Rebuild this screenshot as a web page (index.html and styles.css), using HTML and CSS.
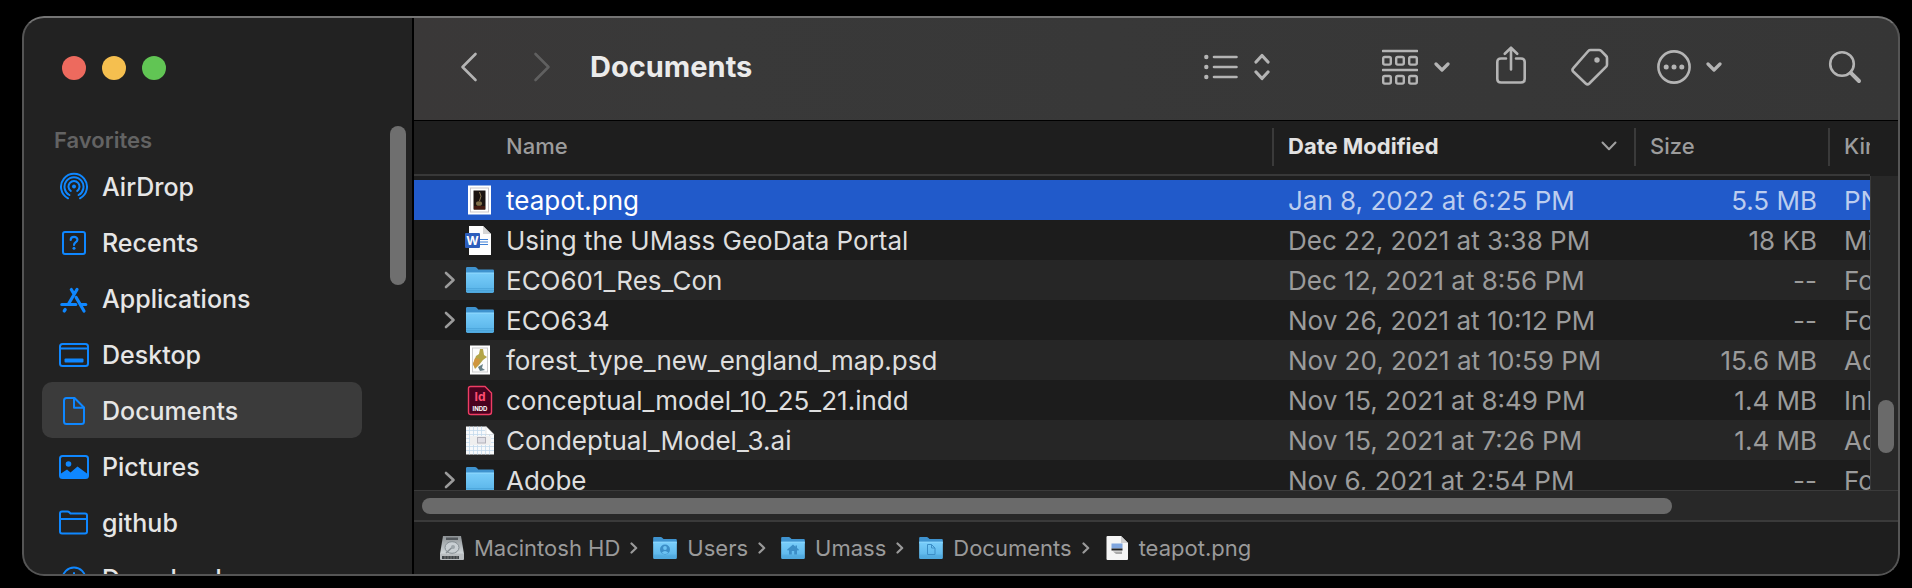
FILE: index.html
```html
<!DOCTYPE html>
<html lang="en">
<head>
<meta charset="utf-8">
<title>Documents</title>
<link rel="stylesheet" href="styles.css">
</head>
<body>
<svg class="defs" aria-hidden="true">
  <defs>
    <linearGradient id="gFolder" x1="0" y1="0" x2="0" y2="1"><stop offset="0" stop-color="#79cdfa"/><stop offset=".75" stop-color="#5fb9ec"/><stop offset="1" stop-color="#4da6dc"/></linearGradient>
    <linearGradient id="gDisk" x1="0" y1="0" x2="0" y2="1"><stop offset="0" stop-color="#8e9396"/><stop offset="1" stop-color="#d3d9dc"/></linearGradient>
    <symbol id="folder" viewBox="0 0 28 26">
      <path d="M0 1.2Q0 0 1.2 0H9q1 0 1.700.8L12.300 2.500H26.800Q28 2.500 28 3.700V8H0Z" fill="#3f93cf"/>
      <path d="M0 6h28v18.600q0 1.400-1.400 1.400H1.400Q0 26 0 24.600Z" fill="url(#gFolder)"/>
      <path d="M0 6h28" stroke="#93dbff" stroke-width="1"/>
      <path d="M0 21.500h28M0 23.500h28" stroke="#459dd3" stroke-width=".6"/>
    </symbol>
    <symbol id="down" viewBox="0 0 16 10"><path d="M2 2l6 6 6-6" fill="none" stroke="currentColor" stroke-width="3.200" stroke-linecap="round" stroke-linejoin="round"/></symbol>
    <symbol id="disclose" viewBox="0 0 12 18"><path d="M2 2l7.500 7L2 16" fill="none" stroke="currentColor" stroke-width="2.600" stroke-linecap="round" stroke-linejoin="round"/></symbol>
    <symbol id="crumb" viewBox="0 0 8 12"><path d="M1.500 1.500L6.200 6 1.500 10.500" fill="none" stroke="currentColor" stroke-width="2.200" stroke-linecap="round" stroke-linejoin="round"/></symbol>
  </defs>
</svg>

<div class="window">
  <aside class="sidebar">
    <div class="lights">
      <button class="light close" aria-label="Close"></button>
      <button class="light minimize" aria-label="Minimize"></button>
      <button class="light zoom" aria-label="Zoom"></button>
    </div>
    <div class="side-body">
      <nav class="places" aria-labelledby="fav">
        <h2 class="places-title" id="fav">Favorites</h2>
        <a class="place" href="#airdrop">
          <svg class="place-icon" viewBox="0 0 30 30"><path d="M9 27A13 13 0 1 1 21 27M10.400 23.700A9.500 9.500 0 1 1 19.600 23.700M11.800 19.700A5.500 5.500 0 1 1 18.200 19.700" transform="translate(0 -.7)"/><circle class="fill" cx="15" cy="14.500" r="2"/></svg>
          AirDrop</a>
        <a class="place" href="#recents">
          <svg class="place-icon" viewBox="0 0 30 30"><rect x="4" y="4" width="22" height="22" rx="2"/><path class="thick" d="M11.700 12C11.700 7.800 18.400 7.800 18.400 11.800 18.400 14.300 15 14 15 17"/><circle class="fill" cx="15" cy="20.300" r="1.500"/></svg>
          Recents</a>
        <a class="place" href="#applications">
          <svg class="place-icon" viewBox="0 0 30 30"><path class="heavy" d="M18 5.500L9.800 19.500M12.300 5.500L15 10M17.200 13.500L25 27M2.800 20.500H16.800M22.500 20.500H26.800M6.200 25.500L5.200 27"/></svg>
          Applications</a>
        <a class="place" href="#desktop">
          <svg class="place-icon" viewBox="0 0 30 30"><rect x="1" y="4" width="28" height="22" rx="2.500"/><path d="M1 8.500H29"/><rect class="fill" x="5.500" y="18.500" width="19" height="4" rx="1"/></svg>
          Desktop</a>
        <a class="place current" href="#documents" aria-current="page">
          <svg class="place-icon" viewBox="0 0 30 30"><path d="M7.500 2H15.500L25 11.500V25.500Q25 28 22.500 28H7.500Q5 28 5 25.500V4.500Q5 2 7.500 2ZM15 2V11.800H25"/></svg>
          Documents</a>
        <a class="place" href="#pictures">
          <svg class="place-icon" viewBox="0 0 30 30"><rect x="1" y="4" width="28" height="22" rx="2.500"/><circle class="fill" cx="9.500" cy="12" r="2.800"/><path class="fill" d="M2 21.500L8 17.500L11.500 20.500L18.500 14.500L28 21.500V25H2Z"/></svg>
          Pictures</a>
        <a class="place" href="#github">
          <svg class="place-icon" viewBox="0 0 30 30"><path d="M1 23.500V5.500Q1 3.500 3 3.500H8.500Q9.500 3.500 10.300 4.300L11.500 5.500H26Q28 5.500 28 7.500V23.500Q28 25.500 26 25.500H3Q1 25.500 1 23.500ZM1 11H28"/></svg>
          github</a>
        <a class="place" href="#downloads">
          <svg class="place-icon" viewBox="0 0 30 30"><circle cx="15" cy="15" r="11.500"/><path d="M15 9V21M10.500 16.500L15 21L19.500 16.500"/></svg>
          Downloads</a>
      </nav>
      <div class="side-thumb"></div>
    </div>
  </aside>

  <main class="main">
    <header class="toolbar">
      <button class="tool back" aria-label="Back"><svg width="18" height="30" viewBox="0 0 18 30"><path d="M15.500 2L2.500 15L15.500 28"/></svg></button>
      <button class="tool forward" aria-label="Forward" disabled><svg width="18" height="30" viewBox="0 0 18 30"><path d="M2.500 2L15.500 15L2.500 28"/></svg></button>
      <h1 class="title">Documents</h1>
      <button class="tool view" aria-label="View as list">
        <svg width="34" height="26" viewBox="0 0 34 26"><path class="thin" d="M10 3H32.500M10 13H32.500M10 23H32.500"/><circle class="solid" cx="2.300" cy="3" r="2.200"/><circle class="solid" cx="2.300" cy="13" r="2.200"/><circle class="solid" cx="2.300" cy="23" r="2.200"/></svg>
        <svg width="16" height="28" viewBox="0 0 16 28"><path class="bold" d="M2 9L8 2.500L14 9M2 19L8 25.500L14 19"/></svg>
      </button>
      <button class="tool group" aria-label="Group items">
        <svg width="36" height="36" viewBox="0 0 36 36"><path class="thin" d="M1 2H35M1 21H35"/><g class="cells"><rect x="1.200" y="8" width="7.600" height="7.600" rx="1.500"/><rect x="14.200" y="8" width="7.600" height="7.600" rx="1.500"/><rect x="27.200" y="8" width="7.600" height="7.600" rx="1.500"/><rect x="1.200" y="27" width="7.600" height="7.600" rx="1.500"/><rect x="14.200" y="27" width="7.600" height="7.600" rx="1.500"/><rect x="27.200" y="27" width="7.600" height="7.600" rx="1.500"/></g></svg>
        <svg width="16" height="10"><use href="#down"/></svg>
      </button>
      <button class="tool share" aria-label="Share"><svg width="30" height="42" viewBox="0 0 30 42"><path d="M10 12.500H5Q1.300 12.500 1.300 16V33Q1.300 36.500 5 36.500H25Q28.700 36.500 28.700 33V16Q28.700 12.500 25 12.500H20M15 23.500V2M8.800 7.800L15 1.700L21.200 7.800"/></svg></button>
      <button class="tool tag" aria-label="Tags"><svg width="38" height="38" viewBox="0 0 38 38"><path d="M19.500 2H28Q29.300 2 30.200 2.900L35.200 8Q36 8.800 36 10V16.500Q36 17.800 35.200 18.700L18.300 35.500Q16.500 37.200 14.700 35.500L2.200 23.500Q.7 21.900 2.300 20.200L17.300 3Q18.200 2 19.500 2Z"/><circle class="solid" cx="26" cy="12" r="2.700"/></svg></button>
      <button class="tool more" aria-label="More actions">
        <svg width="34" height="34" viewBox="0 0 34 34"><circle cx="17" cy="17" r="15.600"/><circle class="solid" cx="9.200" cy="17" r="2.500"/><circle class="solid" cx="17" cy="17" r="2.500"/><circle class="solid" cx="24.800" cy="17" r="2.500"/></svg>
        <svg width="16" height="10"><use href="#down"/></svg>
      </button>
      <button class="tool search" aria-label="Search"><svg width="34" height="34" viewBox="0 0 34 34"><circle cx="14" cy="14" r="11.800"/><path class="handle" d="M22.800 22.800L31 31"/></svg></button>
    </header>

    <section class="listing">
      <div class="scroller">
        <table class="files">
          <colgroup><col><col class="col-date"><col class="col-size"><col class="col-kind"></colgroup>
          <thead>
            <tr><th scope="col" class="name">Name</th><th scope="col" class="sorted" aria-sort="descending"><span class="sort">Date Modified<svg width="16" height="10" viewBox="0 0 16 10"><path d="M1.500 1.500L8 8.300L14.500 1.500"/></svg></span></th><th scope="col">Size</th><th scope="col">Kind</th></tr>
          </thead>
          <tbody>
            <tr class="selected">
              <td><div class="file"><span class="twist"></span><svg class="icon" viewBox="0 0 28 32"><rect x="2" y="1.500" width="23" height="29" fill="#fff"/><rect x="4.500" y="4" width="18" height="24" fill="none" stroke="#c9c5cb"/><rect x="7.500" y="6.500" width="12" height="19" fill="#1b1310"/><path d="M8 22h11v3.500H8z" fill="#43190f"/><path d="M13.500 8q3 4 0 9" fill="none" stroke="#8f7a55"/><ellipse cx="13" cy="19.500" rx="3" ry="2.300" fill="#81704a"/></svg>teapot.png</div></td><td>Jan 8, 2022 at 6:25 PM</td><td class="size">5.5 MB</td><td>PNG image</td></tr>
            <tr>
              <td><div class="file"><span class="twist"></span><svg class="icon" viewBox="0 0 28 32"><path d="M3 2H17L25 10V31H3Z" fill="#fdfdfd"/><path d="M17 2V10H25Z" fill="#d5d5d5"/><path d="M14 15.500h8M14 18h8M14 20.500h8" stroke="#3d7fd6" stroke-width="1.100"/><rect x="-1" y="9" width="15" height="15" rx="1" fill="#2d5ebc"/><text x="6.500" y="21" text-anchor="middle" class="glyph" font-size="12" fill="#fff">W</text></svg>Using the UMass GeoData Portal</div></td><td>Dec 22, 2021 at 3:38 PM</td><td class="size">18 KB</td><td>Microsoft Word</td></tr>
            <tr>
              <td><div class="file"><span class="twist"><svg width="12" height="18"><use href="#disclose"/></svg></span><svg class="icon folder"><use href="#folder"/></svg>ECO601_Res_Con</div></td><td>Dec 12, 2021 at 8:56 PM</td><td class="size">--</td><td>Folder</td></tr>
            <tr>
              <td><div class="file"><span class="twist"><svg width="12" height="18"><use href="#disclose"/></svg></span><svg class="icon folder"><use href="#folder"/></svg>ECO634</div></td><td>Nov 26, 2021 at 10:12 PM</td><td class="size">--</td><td>Folder</td></tr>
            <tr>
              <td><div class="file"><span class="twist"></span><svg class="icon" viewBox="0 0 28 32"><rect x="4" y="1.500" width="20" height="29" fill="#fff"/><rect x="6.500" y="4" width="15" height="24" fill="#fcfcfc" stroke="#ccc"/><path d="M14 5l3 0 1 6 3 2-4 3-4 5-4 4-2-5 3-8 3-2z" fill="#b3a548"/><path d="M9 14l5 1-1 5-4 4-2-4z" fill="#d0963f"/><path d="M12 23l5-3-1 4 3 2-5 1z" fill="#667e85"/></svg>forest_type_new_england_map.psd</div></td><td>Nov 20, 2021 at 10:59 PM</td><td class="size">15.6 MB</td><td>Adobe Photoshop</td></tr>
            <tr>
              <td><div class="file"><span class="twist"></span><svg class="icon" viewBox="0 0 28 32"><path d="M4.500 2.500H19L25.500 9V28Q25.500 30.500 23 30.500H5Q2.500 30.500 2.500 28V4.500Q2.500 2.500 4.500 2.500Z" fill="#49021f" stroke="#ee3d64" stroke-width="1.400"/><text x="14" y="17" text-anchor="middle" class="glyph" font-size="12" fill="#ff4d72">Id</text><text x="14" y="26.500" text-anchor="middle" class="glyph" font-size="6" fill="#fff">INDD</text></svg>conceptual_model_10_25_21.indd</div></td><td>Nov 15, 2021 at 8:49 PM</td><td class="size">1.4 MB</td><td>InDesign</td></tr>
            <tr>
              <td><div class="file"><span class="twist"></span><svg class="icon" viewBox="0 0 28 32"><path d="M0 2.500H20L28 10.500V30.500H0Z" fill="#f7f9fb"/><path d="M3.500 2.500v28M7.500 2.500v28M11.500 2.500v28M15.500 2.500v28M19.500 10.500v20M23.500 10.500v20M0 6.500h19M0 10.500h28M0 14.500h28M0 18.500h28M0 22.500h28M0 26.500h28" stroke="#c3d9ec" stroke-width=".8"/><rect x="4" y="12" width="21" height="9" fill="#efefef"/><rect x="11.500" y="13.500" width="8" height="5.500" fill="#e0dfe6" stroke="#b3b2bb"/><path d="M20 2.500V10.500H28Z" fill="#fff" stroke="#ccc" stroke-width=".5"/></svg>Condeptual_Model_3.ai</div></td><td>Nov 15, 2021 at 7:26 PM</td><td class="size">1.4 MB</td><td>Adobe Illustrator</td></tr>
            <tr>
              <td><div class="file"><span class="twist"><svg width="12" height="18"><use href="#disclose"/></svg></span><svg class="icon folder"><use href="#folder"/></svg>Adobe</div></td><td>Nov 6, 2021 at 2:54 PM</td><td class="size">--</td><td>Folder</td></tr>
          </tbody>
        </table>
      </div>
      <div class="v-track"><div class="v-thumb"></div></div>
    </section>
    <div class="h-track"><div class="h-thumb"></div></div>

    <nav class="path" aria-label="Path">
      <a href="#hd"><svg class="path-icon" viewBox="0 0 24 24"><path d="M3 0H21L24 18H0Z" fill="url(#gDisk)"/><path d="M0 17.500H24V23Q24 24 23 24H1Q0 24 0 23Z" fill="#b9bdc0"/><path d="M2 20h17v3H2z" fill="#40464a"/><path d="M5 20v3M8 20v3M11 20v3M14 20v3M17 20v3" stroke="#777"/><rect x="6" y="1.500" width="12" height="2.500" fill="#54595d"/><ellipse cx="12" cy="11.500" rx="7" ry="5.800" fill="#c9cfd3" stroke="#858d92"/><path d="M12 11.500L6 17" stroke="#858d92" stroke-width="1.500"/><circle cx="13" cy="11" r="2" fill="#9ca4a9"/></svg>Macintosh HD</a>
      <svg class="sep" viewBox="0 0 8 12"><use href="#crumb"/></svg>
      <a href="#users"><svg class="path-icon" viewBox="0 0 24 24"><use href="#folder" y="1" width="24" height="22"/><circle cx="12" cy="13.500" r="5" fill="#3c8ec7"/><circle cx="12" cy="12" r="1.900" fill="#6cc3f3"/><path d="M8.700 16.700q3.300-3.500 6.600 0q-3.300 2.600-6.600 0z" fill="#6cc3f3"/></svg>Users</a>
      <svg class="sep" viewBox="0 0 8 12"><use href="#crumb"/></svg>
      <a href="#umass"><svg class="path-icon" viewBox="0 0 24 24"><use href="#folder" y="1" width="24" height="22"/><path d="M12 8.500L6 13.800L7 14.800L8 14V18.500H10.800V15H13.200V18.500H16V14L17 14.800L18 13.800L16 12V9.500H14.500V10.700Z" fill="#3c8ec7"/></svg>Umass</a>
      <svg class="sep" viewBox="0 0 8 12"><use href="#crumb"/></svg>
      <a href="#docs"><svg class="path-icon" viewBox="0 0 24 24"><use href="#folder" y="1" width="24" height="22"/><path d="M8.500 8.500H12.500L16 12V18.500H8.500ZM12.500 8.500V12H16" fill="none" stroke="#3c8ec7"/></svg>Documents</a>
      <svg class="sep" viewBox="0 0 8 12"><use href="#crumb"/></svg>
      <a href="#teapot"><svg class="path-icon" viewBox="0 0 24 24"><path d="M2.500 0H16L23 7V23Q23 24 22 24H2.500Q1.500 24 1.500 23V1Q1.500 0 2.500 0Z" fill="#f5f5f5"/><path d="M16 0V7H23Z" fill="#d0d0d0"/><rect x="6.500" y="7.500" width="11" height="5" fill="#7fa5de"/><path d="M6.500 12.500h11v2h-11z" fill="#222"/><path d="M8 15.500h9v2.500h-6z" fill="#a9a9a9"/></svg>teapot.png</a>
    </nav>
  </main>
</div>
</body>
</html>
```
FILE: styles.css
```css
* { box-sizing: border-box; }

body {
  margin: 0;
  height: 100vh;
  padding: 16px 12px 12px 22px;
  display: flex;
  background: #000;
  font-family: Inter, "Liberation Sans", sans-serif;
  font-size: 26px;
  overflow: hidden;
}

a { color: inherit; text-decoration: none; }
button { padding: 0; border: 0; background: none; color: inherit; }
.defs { position: absolute; width: 0; height: 0; }

.window {
  position: relative;
  flex: 1;
  min-width: 0;
  display: flex;
  border-radius: 22px;
  overflow: hidden;
  background: #1e1e1e;
}
.window::after {
  content: "";
  position: absolute;
  inset: 0;
  border: 2px solid #555;
  border-top-color: #747474;
  border-radius: 22px;
  pointer-events: none;
}

/* Sidebar */
.sidebar {
  flex: none;
  width: 392px;
  display: flex;
  flex-direction: column;
  border-right: 2px solid #000;
  background: #222;
}
.lights { display: flex; gap: 16px; padding: 40px 40px 30px; }
.light { width: 24px; height: 24px; border-radius: 50%; }
.close { background: #ed6a5e; }
.minimize { background: #f5bf4f; }
.zoom { background: #61c554; }

.side-body {
  flex: 1;
  min-height: 0;
  display: flex;
  justify-content: space-between;
  overflow: hidden;
}
.places { width: 340px; padding-left: 20px; }
.places-title {
  margin: 0;
  padding: 16px 12px 4px;
  font-size: 22px;
  line-height: 28px;
  font-weight: 600;
  color: #636363;
}
.place {
  display: flex;
  align-items: center;
  gap: 13px;
  height: 56px;
  padding: 1px 0 0 17px;
  border-radius: 10px;
  font-size: 25px;
  font-weight: 500;
  color: #e6e6e6;
}
.place.current { background: #3b3b3b; }
.place-icon {
  width: 30px;
  height: 30px;
  fill: none;
  stroke: #0f87ff;
  stroke-width: 2;
  stroke-linecap: round;
  stroke-linejoin: round;
}
.place-icon .fill { fill: #0f87ff; stroke: none; }
.place-icon .thick { stroke-width: 2.2; }
.place-icon .heavy { stroke-width: 3.2; }
.side-thumb {
  width: 16px;
  height: 159px;
  margin: 16px 6px 0 0;
  border-radius: 8px;
  background: #6f6f6f;
}

/* Toolbar */
.main { flex: 1; min-width: 0; display: flex; flex-direction: column; }
.toolbar {
  flex: none;
  display: flex;
  align-items: center;
  height: 105px;
  padding: 0 38px 2px 46px;
  border-bottom: 1px solid #000;
  background: linear-gradient(90deg, #3a3838, #393939 20%, #363636);
  color: #b4b4b4;
}
.tool { display: flex; align-items: center; }
.tool svg {
  fill: none;
  stroke: currentColor;
  stroke-width: 2.6;
  stroke-linecap: round;
  stroke-linejoin: round;
}
.tool .bold { stroke-width: 3.2; }
.tool .handle { stroke-width: 4; }
.tool .solid { fill: currentColor; stroke: none; }
.tool .cells { stroke-width: 2.4; }
.forward { margin-left: 55px; color: #606060; }
.title {
  flex: 1;
  margin: 0 0 0 39px;
  font-size: 29px;
  line-height: 40px;
  font-weight: 700;
  color: #ebebeb;
}
.view { gap: 16px; }
.group { gap: 16px; margin-left: 112px; }
.share { margin-left: 46px; }
.tag { margin-left: 45px; }
.more { gap: 15px; margin-left: 48px; }
.search { margin-left: 106px; }

/* File list */
.listing { flex: 1; min-height: 0; display: flex; padding-right: 2px; }
.scroller { flex: 1; min-width: 0; overflow: hidden; }
.files {
  width: calc(100% + 160px);
  table-layout: fixed;
  border-spacing: 0;
  white-space: nowrap;
  color: #9b9b9b;
}
.col-date { width: 362px; }
.col-size { width: 194px; }
.col-kind { width: 202px; }
.files th {
  height: 55px;
  padding: 0 17px 4px 0;
  border-bottom: 2px solid #383838;
  text-align: left;
  font-size: 22px;
  font-weight: 500;
  color: #9c9c9c;
  background: linear-gradient(#3a3a3a, #3a3a3a) left 7px / 2px 38px no-repeat;
}
.files th + th { padding-left: 16px; }
.files th:first-child { padding-left: 92px; background: none; }
.files th.sorted { font-weight: 700; color: #e2e2e2; }
.sort { display: flex; align-items: center; justify-content: space-between; }
.sort svg { fill: none; stroke: #a0a0a0; stroke-width: 2; stroke-linecap: round; stroke-linejoin: round; }
.files tbody::before { content: ""; display: block; height: 4px; }
.files td { height: 40px; padding: 0 11px 0 16px; }
.files td:first-child { padding-left: 30px; }
.files td.size { text-align: right; }
.files tbody tr { background: #1c1c1c; }
.files tbody tr:nth-child(odd) { background: #262626; }
.files tbody tr.selected { background: #215aca; color: #bccdef; }
.file { display: flex; align-items: center; color: #dedede; }
.selected .file { color: #fff; }
.twist { display: flex; width: 22px; color: #9b9b9b; }
.icon { width: 28px; height: 32px; margin-right: 12px; overflow: visible; }
.icon.folder { height: 26px; }
.glyph { font-family: Inter, sans-serif; font-weight: 700; }

.v-track {
  width: 28px;
  margin-top: 55px;
  padding-top: 224px;
  border-left: 1px solid #3a3a3a;
  background: #282828;
}
.v-thumb { width: 16px; height: 53px; margin-left: 7px; border-radius: 8px; background: #6a6a6a; }
.h-track {
  flex: none;
  height: 32px;
  padding: 7px 8px;
  border-top: 1px solid #3a3a3a;
  border-bottom: 2px solid #3a3a3a;
  background: #282828;
}
.h-thumb { width: 85%; height: 16px; border-radius: 8px; background: #6a6a6a; }

/* Path bar */
.path {
  flex: none;
  display: flex;
  align-items: center;
  height: 54px;
  padding: 0 26px 2px;
  font-size: 22px;
  color: #9a9a9a;
}
.path a { display: flex; align-items: center; gap: 10px; }
.path-icon { width: 24px; height: 24px; }
.sep { width: 8px; height: 12px; margin: 0 15px 0 10px; }
```
